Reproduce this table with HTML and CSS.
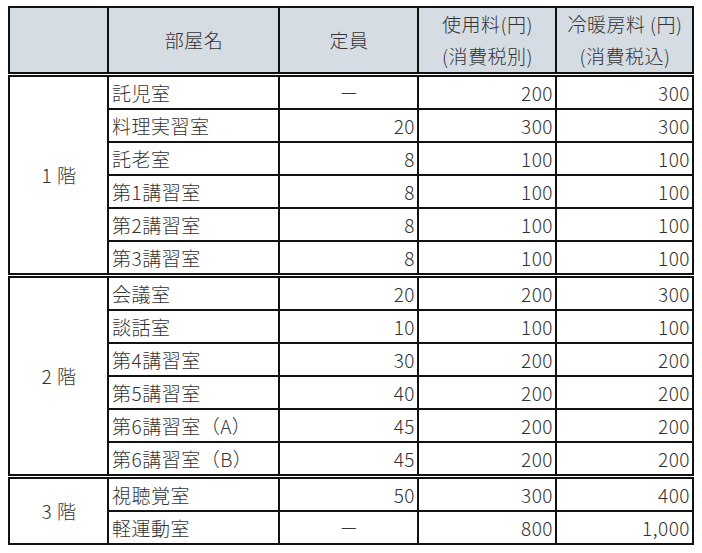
FILE: index.html
```html
<!DOCTYPE html>
<html lang="ja">
<head>
<meta charset="utf-8">
<title>施設使用料</title>
<link rel="stylesheet" href="styles.css">
</head>
<body>
<table class="fee">
  <colgroup>
    <col class="c-floor">
    <col class="c-room">
    <col class="c-cap">
    <col class="c-fee">
    <col class="c-ac">
  </colgroup>
  <thead>
    <tr>
      <th></th>
      <th>部屋名</th>
      <th>定員</th>
      <th>使用料(円)<br>(消費税別)</th>
      <th>冷暖房料 (円)<br>(消費税込)</th>
    </tr>
  </thead>
  <tbody class="group">
    <tr><td class="floor" rowspan="6">1 階</td><td class="room">託児室</td><td class="dash">－</td><td class="num">200</td><td class="num">300</td></tr>
    <tr><td class="room">料理実習室</td><td class="num">20</td><td class="num">300</td><td class="num">300</td></tr>
    <tr><td class="room">託老室</td><td class="num">8</td><td class="num">100</td><td class="num">100</td></tr>
    <tr><td class="room">第1講習室</td><td class="num">8</td><td class="num">100</td><td class="num">100</td></tr>
    <tr><td class="room">第2講習室</td><td class="num">8</td><td class="num">100</td><td class="num">100</td></tr>
    <tr><td class="room">第3講習室</td><td class="num">8</td><td class="num">100</td><td class="num">100</td></tr>
  </tbody>
  <tbody class="group">
    <tr><td class="floor" rowspan="6">2 階</td><td class="room">会議室</td><td class="num">20</td><td class="num">200</td><td class="num">300</td></tr>
    <tr><td class="room">談話室</td><td class="num">10</td><td class="num">100</td><td class="num">100</td></tr>
    <tr><td class="room">第4講習室</td><td class="num">30</td><td class="num">200</td><td class="num">200</td></tr>
    <tr><td class="room">第5講習室</td><td class="num">40</td><td class="num">200</td><td class="num">200</td></tr>
    <tr><td class="room">第6講習室（A）</td><td class="num">45</td><td class="num">200</td><td class="num">200</td></tr>
    <tr><td class="room">第6講習室（B）</td><td class="num">45</td><td class="num">200</td><td class="num">200</td></tr>
  </tbody>
  <tbody class="group">
    <tr><td class="floor" rowspan="2">3 階</td><td class="room">視聴覚室</td><td class="num">50</td><td class="num">300</td><td class="num">400</td></tr>
    <tr><td class="room">軽運動室</td><td class="dash">－</td><td class="num">800</td><td class="num">1,000</td></tr>
  </tbody>
</table>
</body>
</html>
```

FILE: styles.css
```css
html, body {
  background: #ffffff;
}

body {
  margin: 6px 0 0 8px;
  font-family: "Noto Sans CJK JP", "Noto Sans", sans-serif;
  font-weight: 300;
  color: #333333;
}

.fee {
  border-collapse: collapse;
  table-layout: fixed;
  width: 684px;
  font-size: 19px;
}

.c-floor { width: 99px; }
.c-room { width: 171px; }
.c-cap { width: 139px; }
.c-fee { width: 138px; }
.c-ac { width: 137px; }

.fee th,
.fee td {
  border: 2px solid #111111;
  padding: 0 2px 0 3px;
  white-space: nowrap;
  overflow: hidden;
  letter-spacing: 0.5px;
}

.fee th {
  background: #d6dce4;
  font-weight: 300;
  line-height: 32px;
  height: 63px;
  text-align: center;
  border-bottom: 5px double #111111;
}

.fee td {
  height: 31px;
  line-height: 30px;
}

.group {
  border-top: 5px double #111111;
}

.floor {
  text-align: center;
}

.room {
  text-align: left;
}

.num {
  text-align: right;
}

.dash {
  text-align: center;
}
```
